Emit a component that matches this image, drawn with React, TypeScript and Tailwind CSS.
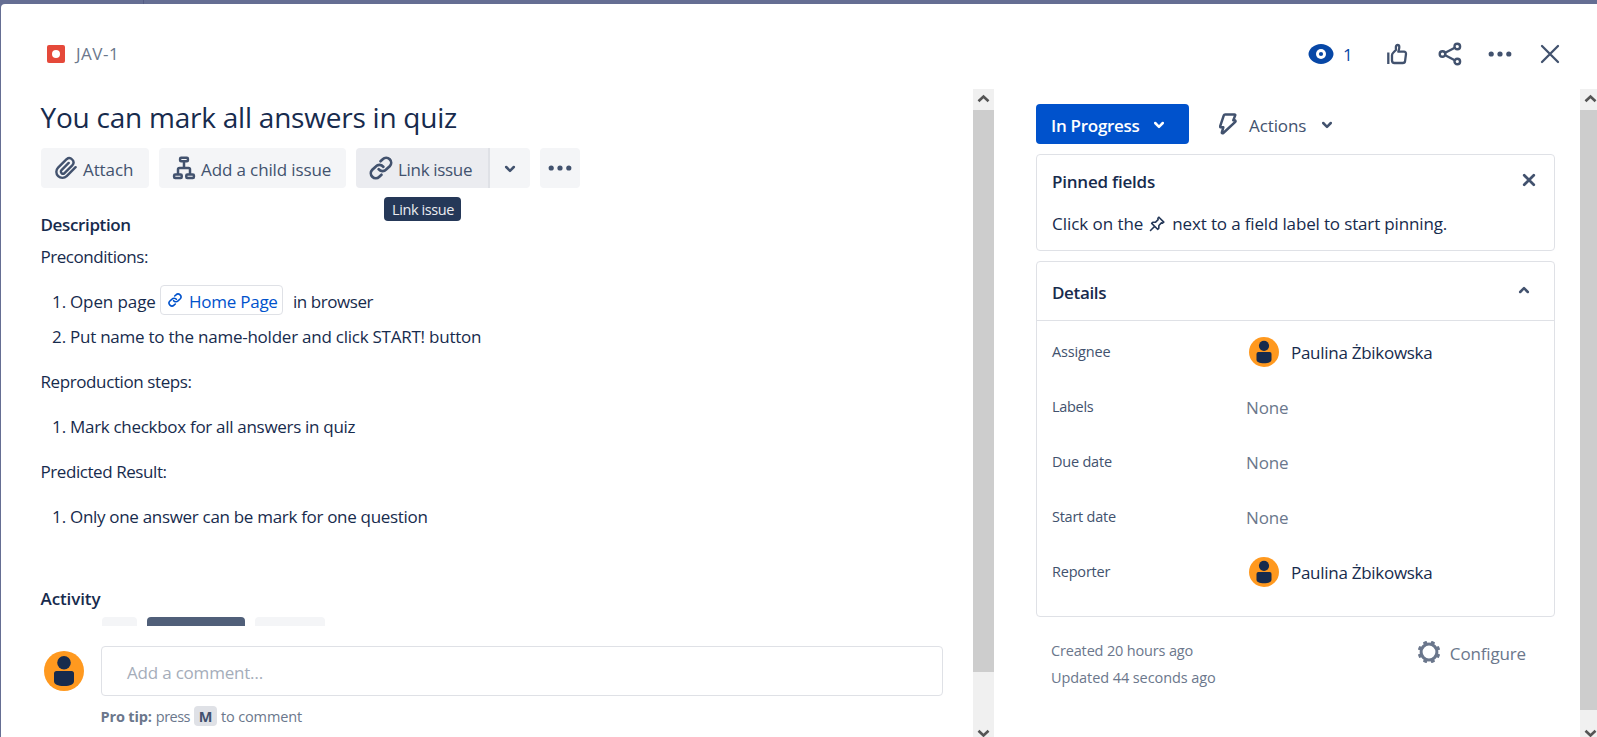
import type { ReactNode } from 'react';

const ChevronDown = ({ className = '' }: { className?: string }) => (
  <svg className={className} width="12" height="8" viewBox="0 0 12 8" fill="none" stroke="currentColor" strokeWidth="2.5" strokeLinecap="round" strokeLinejoin="round">
    <path d="M2.2 2 6 5.8 9.8 2" />
  </svg>
);

const LinkIcon = ({ size }: { size: number }) => (
  <svg width={size} height={size} viewBox="0 0 24 24" fill="none" stroke="currentColor" strokeWidth="2.7" strokeLinecap="round" strokeLinejoin="round">
    <path d="M9.6 13.2a5 5 0 0 0 7.5.4l3.6-3.4a4.9 4.9 0 0 0-7-7l-2.2 2" />
    <path d="M14.4 10.8a5 5 0 0 0-7.5-.4l-3.6 3.4a4.9 4.9 0 0 0 7 7l2.2-2" />
  </svg>
);

const ClipIcon = () => (
  <svg width="24" height="24" viewBox="0 0 24 24" fill="none" stroke="currentColor" strokeWidth="2.4" strokeLinecap="round" strokeLinejoin="round">
    <path d="m21.6 11.2-8.9 8.9a6 6 0 0 1-8.6-8.5l8.5-8.4a4.2 4.2 0 0 1 5.9 5.9l-8 8a2.1 2.1 0 0 1-3-3l7.2-7.2" />
  </svg>
);

const ChildIcon = () => (
  <svg width="24" height="24" viewBox="0 0 24 24" fill="none" stroke="currentColor" strokeWidth="2.5" strokeLinejoin="round">
    <rect x="8.1" y="1.7" width="7.8" height="3.6" rx="1" />
    <rect x="2.100" y="18.500" width="7.600" height="3.600" rx="1" />
    <rect x="14.300" y="18.500" width="7.600" height="3.600" rx="1" />
    <path d="M12 6v6M6 18v-4.500a1.500 1.500 0 0 1 1.500-1.500h9a1.500 1.500 0 0 1 1.500 1.500V18" />
  </svg>
);

const Dots = () => (
  <svg width="24" height="6" viewBox="0 0 24 6" fill="currentColor">
    <circle cx="3.200" cy="3" r="2.600" />
    <circle cx="12" cy="3" r="2.600" />
    <circle cx="20.800" cy="3" r="2.600" />
  </svg>
);

const Avatar = ({ size }: { size: number }) => (
  <svg width={size} height={size} viewBox="0 0 40 40" className="shrink-0">
    <circle cx="20" cy="20" r="20" fill="#ff991f" />
    <circle cx="20" cy="11.700" r="6.800" fill="#172b4d" />
    <path d="M10 22.500a2.500 2.500 0 0 1 2.500-2.500h15a2.500 2.500 0 0 1 2.500 2.500V30c0 3.500-3.500 5-10 5s-10-1.500-10-5Z" fill="#172b4d" />
  </svg>
);

const Arrow = ({ up = false }: { up?: boolean }) => (
  <svg width="13" height="9" viewBox="0 0 13 9" fill="none" stroke="#555" strokeWidth="2.600">
    {up ? <path d="M1.500 7.300 6.500 2.500l5 4.800" /> : <path d="M1.500 1.700l5 4.800 5-4.800" />}
  </svg>
);

function Scrollbar({ thumb, className }: { thumb: string; className: string }) {
  return (
    <div className={`flex shrink-0 flex-col overflow-hidden bg-[#f0f0f0] ${className}`}>
      <div className="flex h-[21px] w-[21px] shrink-0 items-center justify-center pb-[3px]">
        <Arrow up />
      </div>
      <div className={`shrink-0 bg-[#cdcdcd] ${thumb}`} />
      <div className="mt-auto flex h-[8px] w-[21px] shrink-0 justify-center">
        <Arrow />
      </div>
    </div>
  );
}

function Field({ label, track, children }: { label: string; track: string; children: ReactNode }) {
  return (
    <div className="flex h-[55px] items-center">
      <div className={`w-[194px] shrink-0 text-[14.500px] font-medium text-[#42526e] ${track}`}>{label}</div>
      {children}
    </div>
  );
}

const None = () => <div className="pt-[2px] tracking-[-0.15px] text-[#6b778c]">None</div>;

const Person = () => (
  <div className="flex items-center pl-[3px]">
    <Avatar size={30} />
    <span className="ml-[12px] pt-[2px] tracking-[-0.28px]">Paulina Żbikowska</span>
  </div>
);

export default function App() {
  return (
    <div className="flex h-[737px] w-[1597px] flex-col overflow-hidden bg-[#656e93] font-['Open_Sans','Noto_Sans',sans-serif] text-[17px] leading-6 text-[#172b4d]">
      <div className="flex h-[4px] shrink-0">
        <div className="w-[144px] border-r border-[#555d85]" />
      </div>
      <div className="ml-px flex min-h-0 flex-1 flex-col overflow-hidden rounded-tl-[4px] bg-white">
        <header className="flex h-[85px] shrink-0 items-center pb-px pl-[46px]">
          <div className="mt-[15px] flex h-[18px] w-[18px] items-center justify-center rounded-[2px] bg-[#e5493a]">
            <div className="h-[8px] w-[8px] rounded-full bg-white" />
          </div>
          <span className="ml-[11px] mt-[16px] tracking-[0.5px] text-[#6b778c]">JAV-1</span>
          <div className="ml-auto mt-[15px] flex items-center text-[#42526e]">
            <svg width="26" height="20" viewBox="0 0 26 20" className="mr-[9px]">
              <path d="M13 0C6 0 .5 5.500.5 10S6 20 13 20s12.500-5.500 12.500-10S20 0 13 0Z" fill="#0747a6" />
              <circle cx="13" cy="10" r="5" fill="#fff" />
              <circle cx="13" cy="10" r="2.100" fill="#0747a6" />
            </svg>
            <span className="w-[10px] pt-[3px] text-[#0747a6]">1</span>
            <svg width="22" height="22" viewBox="0 0 22 22" fill="none" stroke="currentColor" strokeWidth="2.300" strokeLinejoin="round" className="ml-[33px]">
              <path d="M2.300 9.500v11.500" />
              <path d="M6 12.200c0-1.200.6-2 1.400-2.700L9.900 7V3.800C9.900 2.700 10.600 2 11.600 2s1.700.8 1.700 1.900c0 1.600-.4 3.200-1 4.700h5.700a2 2 0 0 1 2 2.200l-.9 7a2.400 2.400 0 0 1-2.400 2.200H8.500A2.500 2.500 0 0 1 6 17.500Z" />
            </svg>
            <svg width="24" height="24" viewBox="0 0 24 24" fill="none" stroke="currentColor" strokeWidth="2.400" className="ml-[30px]">
              <circle cx="4.500" cy="12" r="2.800" />
              <circle cx="19.300" cy="4.500" r="2.800" />
              <circle cx="19.300" cy="19.500" r="2.800" />
              <path d="M7.200 10.700 16.800 5.800M7.200 13.300l9.600 4.900" />
            </svg>
            <div className="ml-[26px]">
              <Dots />
            </div>
            <svg width="20" height="20" viewBox="0 0 20 20" fill="none" stroke="currentColor" strokeWidth="2.300" strokeLinecap="round" className="ml-[28px] mr-[37px]">
              <path d="M2 2l16 16M18 2 2 18" />
            </svg>
          </div>
        </header>

        <div className="flex min-h-0 flex-1">
          <main className="flex w-[972px] shrink-0 flex-col pl-[39.500px]">
            <h1 className="h-[59px] shrink-0 text-[28px] leading-[56px] tracking-[-0.23px]">You can mark all answers in quiz</h1>
            <div className="ml-[0.500px] flex h-[40px] shrink-0 gap-[10px] text-[#42526e]">
              <button className="flex w-[108px] items-center rounded-[4px] bg-[#f4f5f7] pl-[13px]">
                <ClipIcon />
                <span className="ml-[5px] pt-[3px] tracking-[-0.1px]">Attach</span>
              </button>
              <button className="flex w-[187px] items-center rounded-[4px] bg-[#f4f5f7] pl-[13px]">
                <ChildIcon />
                <span className="ml-[5px] whitespace-nowrap pt-[3px] tracking-[-0.12px]">Add a child issue</span>
              </button>
              <div className="relative flex w-[174px]">
                <button className="flex w-[134px] items-center rounded-l-[4px] border-r-2 border-[#dfe1e6] bg-[#ebecf0] pl-[13px]">
                  <LinkIcon size={24} />
                  <span className="ml-[5px] whitespace-nowrap pt-[3px] tracking-[-0.32px]">Link issue</span>
                </button>
                <button className="flex flex-1 items-center justify-center rounded-r-[4px] bg-[#f4f5f7]">
                  <ChevronDown className="mt-px" />
                </button>
                <div className="absolute left-[28px] top-[49px] h-[24px] w-[77px] whitespace-nowrap rounded-[4px] bg-[#253858] pl-[8px] text-[14.500px] leading-[25px] tracking-[-0.4px] text-[#ebecf0]">
                  Link issue
                </div>
              </div>
              <button className="flex w-[40px] items-center justify-center rounded-[4px] bg-[#f4f5f7]">
                <Dots />
              </button>
            </div>

            <h2 className="mt-[25px] font-semibold tracking-[-0.36px]">Description</h2>
            <p className="mt-[8px] tracking-[-0.45px]">Preconditions:</p>
            <div className="mt-[16px] flex h-[30px] items-center">
              <span className="w-[29.500px] pl-[11.500px] pt-[3px]">1.</span>
              <span className="w-[90px] pt-[3px] tracking-[-0.1px]">Open page</span>
              <a className="flex h-[30px] w-[123px] items-center rounded-[4px] border border-[#dfe1e6] pl-[7px] text-[#0052cc]">
                <LinkIcon size={14} />
                <span className="ml-[7px] whitespace-nowrap pt-[3px] tracking-[-0.25px]">Home Page</span>
              </a>
              <span className="ml-[10px] pt-[3px] tracking-[-0.45px]">in browser</span>
            </div>
            <div className="mt-[10px] flex">
              <span className="w-[29.500px] pl-[11.500px]">2.</span>
              <span className="tracking-[-0.24px]">Put name to the name-holder and click START! button</span>
            </div>
            <p className="mt-[21px] tracking-[-0.4px]">Reproduction steps:</p>
            <div className="mt-[21px] flex">
              <span className="w-[29.500px] pl-[11.500px]">1.</span>
              <span className="tracking-[-0.3px]">Mark checkbox for all answers in quiz</span>
            </div>
            <p className="mt-[21px] tracking-[-0.43px]">Predicted Result:</p>
            <div className="mt-[21px] flex">
              <span className="w-[29.500px] pl-[11.500px]">1.</span>
              <span className="tracking-[-0.31px]">Only one answer can be mark for one question</span>
            </div>

            <h2 className="mt-[58px] font-semibold tracking-[-0.1px]">Activity</h2>
            <div className="mt-[6px] flex h-[9px] shrink-0 gap-[10px] pl-[61.500px]">
              <div className="w-[35px] rounded-t-[4px] bg-[#f4f5f7]" />
              <div className="w-[98px] rounded-t-[4px] bg-[#505f79]" />
              <div className="w-[70px] rounded-t-[4px] bg-[#f4f5f7]" />
            </div>

            <div className="mt-[20px] flex shrink-0 items-center pl-[3.500px]">
              <Avatar size={40} />
              <div className="ml-[17px] flex h-[50px] w-[842px] items-center rounded-[4px] border border-[#dfe1e6] pl-[25px] pt-[3px] tracking-[-0.2px] text-[#a5adba]">
                Add a comment…
              </div>
            </div>
            <div className="mt-[10px] flex h-[20px] shrink-0 items-center pl-[60px] text-[14.500px] text-[#6b778c]">
              <span className="pt-px font-bold tracking-[-0.15px]">Pro tip:</span>
              <span className="ml-[4px] pt-px tracking-[-0.5px]">press</span>
              <span className="ml-[4px] flex h-[20px] w-[23px] items-center justify-center rounded-[4px] bg-[#dfe1e6] pt-px font-bold text-[#42526e]">M</span>
              <span className="ml-[4px] pt-px tracking-[-0.15px]">to comment</span>
            </div>
          </main>

          <Scrollbar className="w-[21px]" thumb="h-[562px]" />

          <aside className="w-[586px] shrink-0 pl-[42px] pt-[15px]">
            <div className="flex h-[40px] items-center">
              <button className="flex h-[40px] w-[153px] items-center rounded-[4px] bg-[#0052cc] pl-[15px] font-semibold text-white">
                <span className="w-[102px] pt-[3px] text-left tracking-[-0.28px]">In Progress</span>
                <ChevronDown className="mt-px" />
              </button>
              <svg width="18" height="22" viewBox="0 0 18 22" fill="none" stroke="#42526e" strokeWidth="2.500" strokeLinejoin="round" className="ml-[30px]">
                <path d="M6.200 1.400h9.300c.6 0 .9.500.7 1L14.300 7.300h1.400c.8 0 1.100.9.600 1.500L4.300 20c-.8.700-1.600.1-1.400-.7l1.400-5H2c-.7 0-1-.5-.8-1.100L4.800 2.300c.2-.6.700-.9 1.400-.9Z" />
              </svg>
              <span className="ml-[12px] w-[72px] pt-[3px] tracking-[-0.1px] text-[#42526e]">Actions</span>
              <ChevronDown className="mt-px text-[#42526e]" />
            </div>

            <section className="mt-[10px] h-[97px] w-[519px] rounded-[4px] border border-[#dfe1e6] pl-[15px]">
              <div className="flex items-center justify-between pt-[15px]">
                <h2 className="font-semibold tracking-[-0.22px]">Pinned fields</h2>
                <svg width="14" height="14" viewBox="0 0 14 14" fill="none" stroke="#42526e" strokeWidth="2.700" strokeLinecap="round" className="mb-[4px] mr-[18px]">
                  <path d="m2.200 2.200 9.600 9.600M11.800 2.200 2.200 11.800" />
                </svg>
              </div>
              <div className="mt-[18px] flex items-center whitespace-nowrap">
                <span className="tracking-[-0.05px]">Click on the</span>
                <svg width="16" height="16" viewBox="0 0 16 16" fill="none" stroke="#253858" strokeWidth="1.600" strokeLinejoin="round" strokeLinecap="round" className="ml-[6px] mr-[7px]">
                  <path d="M9.900 1.200 14.800 6.100 13.500 7.100 12.400 6.900 9.900 9.500 9.800 12.300 8.600 13.300 2.700 7.400 3.800 6.200 6.600 6.100 9.100 3.600 8.900 2.300ZM5.500 10.500 1.500 14.500" />
                </svg>
                <span className="tracking-[-0.15px]">next to a field label to start pinning.</span>
              </div>
            </section>

            <section className="mt-[10px] h-[356px] w-[519px] rounded-[4px] border border-[#dfe1e6]">
              <div className="flex h-[59px] items-center border-b border-[#dfe1e6] pl-[15px]">
                <h2 className="pt-[3px] font-semibold tracking-[-0.35px]">Details</h2>
                <ChevronDown className="mb-[2px] ml-auto mr-[24px] rotate-180 text-[#42526e]" />
              </div>
              <div className="pl-[15px] pt-[3px]">
                <Field label="Assignee" track="tracking-[-0.15px]"><Person /></Field>
                <Field label="Labels" track="tracking-[-0.3px]"><None /></Field>
                <Field label="Due date" track="tracking-[-0.22px]"><None /></Field>
                <Field label="Start date" track="tracking-[-0.25px]"><None /></Field>
                <Field label="Reporter" track="tracking-[-0.2px]"><Person /></Field>
              </div>
            </section>

            <div className="mt-[20px] flex w-[519px] text-[#6b778c]">
              <div className="pl-[15px] text-[14.500px] leading-[27px]">
                <p className="tracking-[-0.16px]">Created 20 hours ago</p>
                <p className="tracking-[-0.08px]">Updated 44 seconds ago</p>
              </div>
              <div className="ml-auto mr-[29px] flex h-[30px] items-center">
                <svg width="22" height="22" viewBox="0 0 22 22" className="mb-px mr-[10px]">
                  <circle cx="11" cy="11" r="7.900" fill="none" stroke="#6b778c" strokeWidth="3" />
                  {[22.5, 67.5, 112.5, 157.5, 202.5, 247.5, 292.5, 337.5].map((a) => (
                    <rect key={a} x="9" y="-0.300" width="4" height="4" rx="0.800" fill="#6b778c" transform={`rotate(${a} 11 11)`} />
                  ))}
                </svg>
                <span className="pt-[3px] tracking-[-0.15px]">Configure</span>
              </div>
            </div>
          </aside>

          <Scrollbar className="w-[17px]" thumb="h-[600px]" />
        </div>
      </div>
    </div>
  );
}
